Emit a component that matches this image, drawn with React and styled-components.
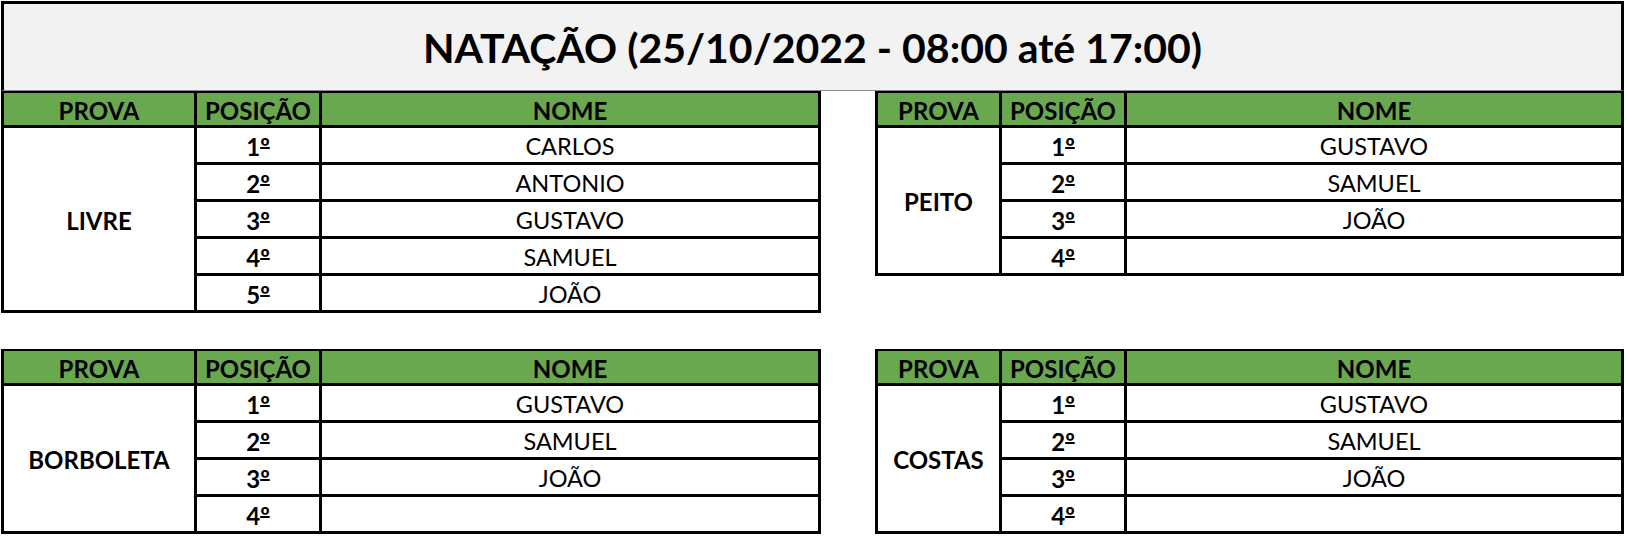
import React from 'react';
import styled, { createGlobalStyle } from 'styled-components';

const GlobalStyle = createGlobalStyle`
  html, body { margin: 0; padding: 0; background: #fff; }
  body { font-family: Lato, "Liberation Sans", sans-serif; color: #000; }
  * { box-sizing: border-box; }
`;

const Page = styled.div`
  width: 1627px;
  height: 537px;
  padding: 1px 0 0 1px;
  overflow: hidden;
`;

const TitleBox = styled.div`
  width: 1623px;
  height: 90px;
  background: #f2f2f2;
  border: 3px solid #000;
  border-bottom: 1px solid #8c8c8c;
  display: flex;
  align-items: center;
  justify-content: center;
  font-size: 41px;
  font-weight: 700;
`;

const Boards = styled.div`
  display: grid;
  grid-template-columns: 820px 749px;
  column-gap: 54px;
  row-gap: 36px;
  align-items: start;
`;

const Table = styled.div`
  display: grid;
  grid-template-columns: ${(p) => p.$cols};
  grid-template-rows: 35px repeat(${(p) => p.$rows}, 37px);
  border-top: 2px solid #000;
  border-left: 3px solid #000;
`;

const Cell = styled.div`
  display: flex;
  align-items: center;
  justify-content: center;
  border-right: 3px solid #000;
  border-bottom: 3px solid #000;
  background: ${(p) => (p.$head ? '#6aa84f' : '#fff')};
  font-weight: ${(p) => (p.$bold ? 700 : 400)};
  font-size: ${(p) => (p.$bold ? '24px' : '23.5px')};
  white-space: nowrap;
  padding-top: 2px;
  ${(p) => (p.$span ? `grid-column: 1; grid-row: span ${p.$span};` : '')}
`;

const Ordinal = styled.span`
  text-decoration: underline;
  text-decoration-thickness: 2px;
  text-underline-offset: -0.36em;
`;

const tables = [
  { prova: 'LIVRE', cols: '193px 125px 499px', names: ['CARLOS', 'ANTONIO', 'GUSTAVO', 'SAMUEL', 'JOÃO'] },
  { prova: 'PEITO', cols: '124px 125px 497px', names: ['GUSTAVO', 'SAMUEL', 'JOÃO', ''] },
  { prova: 'BORBOLETA', cols: '193px 125px 499px', names: ['GUSTAVO', 'SAMUEL', 'JOÃO', ''] },
  { prova: 'COSTAS', cols: '124px 125px 497px', names: ['GUSTAVO', 'SAMUEL', 'JOÃO', ''] },
];

function Result({ prova, cols, names }) {
  return (
    <Table $cols={cols} $rows={names.length}>
      <Cell $head $bold>PROVA</Cell>
      <Cell $head $bold>POSIÇÃO</Cell>
      <Cell $head $bold>NOME</Cell>
      <Cell $bold $span={names.length}>{prova}</Cell>
      {names.map((n, i) => (
        <React.Fragment key={i}>
          <Cell $bold>
            {i + 1}
            <Ordinal>º</Ordinal>
          </Cell>
          <Cell>{n}</Cell>
        </React.Fragment>
      ))}
    </Table>
  );
}

export default function App() {
  return (
    <>
      <GlobalStyle />
      <Page>
        <TitleBox>NATAÇÃO (25/10/2022 - 08:00 até 17:00)</TitleBox>
        <Boards>
          {tables.map((t) => (
            <Result key={t.prova} {...t} />
          ))}
        </Boards>
      </Page>
    </>
  );
}
